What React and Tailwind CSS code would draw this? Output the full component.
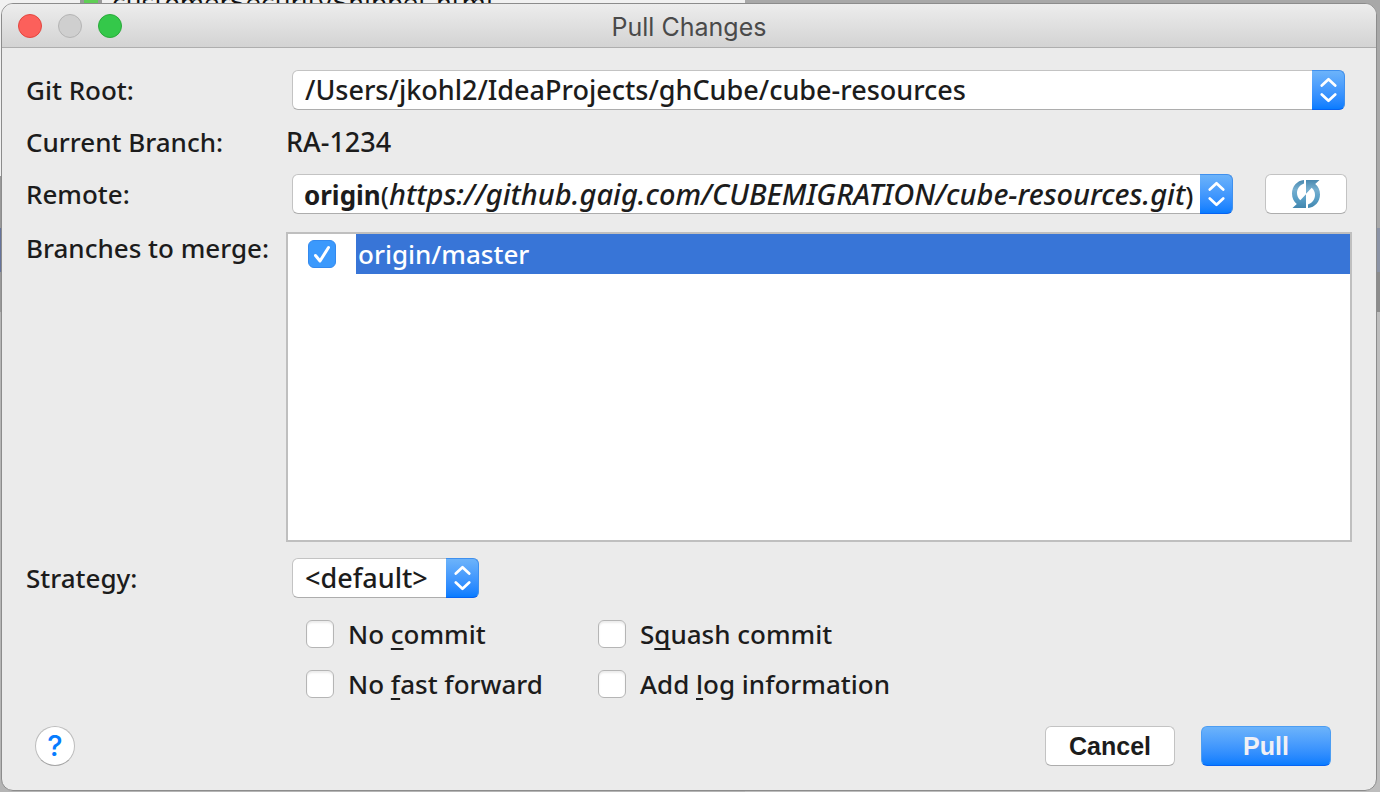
import React from "react";

const FIELD = "h-10 rounded-md border border-[#c3c3c3] border-b-[#adadad] bg-white text-[#1c1c1c]";

function Arrows() {
  return (
    <span className="pointer-events-none absolute inset-y-0 right-0 flex w-[33px] items-center justify-center rounded-r-md border border-l-0 border-[#3f90ee] border-b-[#0763f2] bg-linear-to-b from-[#6cb3fa] to-[#067cff]">
      <svg width="18" height="26" viewBox="0 0 18 26" fill="none" stroke="#fff" strokeWidth="2.7" strokeLinecap="round" strokeLinejoin="round" aria-hidden="true">
        <path d="M2.800 8.500 9.500 2.200 16.200 8.500M2.800 17.500 9.500 23.800 16.200 17.500" />
      </svg>
    </span>
  );
}

function Dropdown({ id, className, children }) {
  return (
    <div className={`relative ${className}`}>
      <select id={id} className={`${FIELD} w-full appearance-none pr-9 pl-3 text-[27px] outline-none`}>
        {children}
      </select>
      <Arrows />
    </div>
  );
}

function RefreshIcon() {
  return (
    <svg width="30" height="30" viewBox="0 0 30 30" aria-hidden="true">
      <defs>
        <linearGradient id="refresh" x1="0" y1="0" x2="0" y2="30" gradientUnits="userSpaceOnUse">
          <stop offset="0" stopColor="#4484ab" />
          <stop offset=".35" stopColor="#76afd0" />
          <stop offset=".65" stopColor="#5a9fc6" />
          <stop offset="1" stopColor="#3f83ab" />
        </linearGradient>
      </defs>
      <g fill="url(#refresh)">
        <path d="M13 1v3.500C8.700 6.200 6 9.700 6 14c0 3 1.200 5.300 3.300 7.200L15 15.300V29H1.500l4.300-4C2.700 22.500 1 19 1 14.500 1 7.500 6 1.500 13 1Z" />
        <path d="M17 29v-3.500c4.300-1.700 7-5.200 7-9.500 0-3-1.200-5.300-3.300-7.200L15 14.700V1h13.500l-4.300 4C27.300 7.500 29 11 29 15.500 29 22.500 24 28.500 17 29Z" />
      </g>
    </svg>
  );
}

function Option({ id, children }) {
  return (
    <div className="flex items-center gap-[14px]">
      <input id={id} type="checkbox" className="size-7 appearance-none rounded-md border border-[#b5b5b5] bg-white shadow-[inset_0_2px_2px_#ececec] checked:bg-[#3b99fc]" />
      <label htmlFor={id}>{children}</label>
    </div>
  );
}

function Key({ children }) {
  return <u className="decoration-2 underline-offset-4 [text-decoration-skip-ink:none]">{children}</u>;
}

function Backdrop() {
  return (
    <div className="absolute inset-0 flex overflow-hidden" aria-hidden="true">
      <div className="flex h-full w-[745px] flex-col bg-[#f1f1f1]">
        <div className="flex h-44 items-start gap-[10px] pl-20">
          <span className="h-6 w-[22px] border-x-4 border-[#999] bg-[#5fce55]" />
          <span className="-mt-2 font-['DejaVu_Sans',sans-serif] text-[25px] leading-6 text-[#111]">customerSecuritySnippet.html</span>
        </div>
        <div className="h-[52px] bg-[#999]" />
        <div className="h-11 bg-[#66749c]" />
        <div className="h-10 bg-[#999]" />
        <div className="flex-1 bg-[#b5b5b5]" />
      </div>
      <div className="flex h-full flex-1 flex-col bg-[#a8a8a8]">
        <div className="h-[228px]" />
        <div className="h-11 bg-[#8b93a5]" />
        <div className="h-10 bg-[#8c8c8c]" />
        <div className="flex-1 bg-[#bdbdbd]" />
      </div>
    </div>
  );
}

export default function App() {
  return (
    <div className="relative flex min-h-screen flex-col pt-[3px] pr-[3px] pb-px pl-px font-['Noto_Sans',sans-serif] text-[26px] leading-9 font-medium text-[#1c1c1c]">
      <Backdrop />
      <main className="relative flex flex-1 flex-col overflow-hidden rounded-xl border border-[#8c8c8c] bg-[#ebebeb]">
        <header className="relative flex h-11 items-center justify-center border-b border-[#aeaeae] bg-linear-to-b from-[#ededed] to-[#d3d3d3]">
          <div className="absolute left-4 flex gap-4">
            <button aria-label="Close" className="size-6 rounded-full border border-[#e2463f] bg-[#fc605b]" />
            <button aria-label="Minimize" disabled className="size-6 rounded-full border border-[#b4b4b4] bg-[#cfcfcf]" />
            <button aria-label="Zoom" className="size-6 rounded-full border border-[#2aa93a] bg-[#34c84a]" />
          </div>
          <h1 className="pt-0.5 font-[Inter,sans-serif] text-[25px] font-normal text-[#4a4a4a]">Pull Changes</h1>
        </header>

        <form className="flex flex-1 flex-col px-6 pt-[22px] pb-6" onSubmit={(e) => e.preventDefault()}>
          <div className="grid flex-1 grid-cols-[260px_minmax(0,1fr)] grid-rows-[40px_40px_40px_minmax(0,1fr)_40px] gap-y-3">
            <label htmlFor="root" className="self-center">Git Root:</label>
            <Dropdown id="root" className="mr-[7px] ml-[6px]">
              <option>/Users/jkohl2/IdeaProjects/ghCube/cube-resources</option>
            </Dropdown>

            <span className="self-center">Current Branch:</span>
            <span className="self-center text-[27px]">RA-1234</span>

            <label htmlFor="remote" className="self-center">Remote:</label>
            <div className="mr-[5px] ml-[6px] flex gap-8">
              <div className="relative min-w-0 flex-1">
                <div className={`${FIELD} flex items-center overflow-hidden pr-9 pl-[11px] whitespace-nowrap`}>
                  <span><b>origin</b>(<i className="text-[29px]">https://github.gaig.com/CUBEMIGRATION/cube-resources.git</i>)</span>
                </div>
                <Arrows />
                <select id="remote" className="absolute inset-0 w-full opacity-0">
                  <option>origin</option>
                </select>
              </div>
              <button aria-label="Refresh remotes" className={`${FIELD} flex w-[82px] items-center justify-center`}>
                <RefreshIcon />
              </button>
            </div>

            <span className="mt-1">Branches to merge:</span>
            <div className="mt-[6px] mb-1 border-2 border-[#bfbfbf] bg-white">
              <div className="flex h-10 items-center">
                <span className="relative mx-5 flex size-7 shrink-0">
                  <input id="master" type="checkbox" defaultChecked className="peer size-7 appearance-none rounded-md border border-[#b5b5b5] bg-white checked:border-[#3389ee] checked:bg-[#3b99fc]" />
                  <svg className="pointer-events-none absolute inset-0 hidden peer-checked:block" width="28" height="28" viewBox="0 0 28 28" fill="none" stroke="#fff" strokeWidth="3" strokeLinecap="round" strokeLinejoin="round" aria-hidden="true">
                    <path d="m7.500 15.500 4.500 5.500 8.500-13.500" />
                  </svg>
                </span>
                <label htmlFor="master" className="flex h-full flex-1 items-center bg-[#3875d7] pl-0.5 text-white">origin/master</label>
              </div>
            </div>

            <label htmlFor="strategy" className="self-center">Strategy:</label>
            <Dropdown id="strategy" className="ml-[6px] w-[187px]">
              <option>&lt;default&gt;</option>
            </Dropdown>
          </div>

          <div className="mt-[18px] ml-[280px] grid grid-cols-[292px_1fr] gap-y-[14px]">
            <Option id="no-commit">No <Key>c</Key>ommit</Option>
            <Option id="squash">S<Key>q</Key>uash commit</Option>
            <Option id="no-ff">No <Key>f</Key>ast forward</Option>
            <Option id="log">Add <Key>l</Key>og information</Option>
          </div>

          <footer className="mt-6 flex items-center gap-[26px] pr-[21px] pl-[9px] font-['Liberation_Sans',sans-serif] text-[25px] font-bold">
            <button aria-label="Help" className="mr-auto size-10 rounded-full border border-[#bdbdbd] border-b-[#a5a5a5] bg-white font-[Inter,sans-serif] text-[29px] font-medium text-[#067cff]">?</button>
            <button className={`${FIELD} w-[130px]`}>Cancel</button>
            <button type="submit" className="h-10 w-[130px] rounded-md border border-[#4c9df2] border-b-[#0763f2] bg-linear-to-b from-[#6cb3fa] to-[#067cff] text-[#f0f0f5]">Pull</button>
          </footer>
        </form>
      </main>
    </div>
  );
}
